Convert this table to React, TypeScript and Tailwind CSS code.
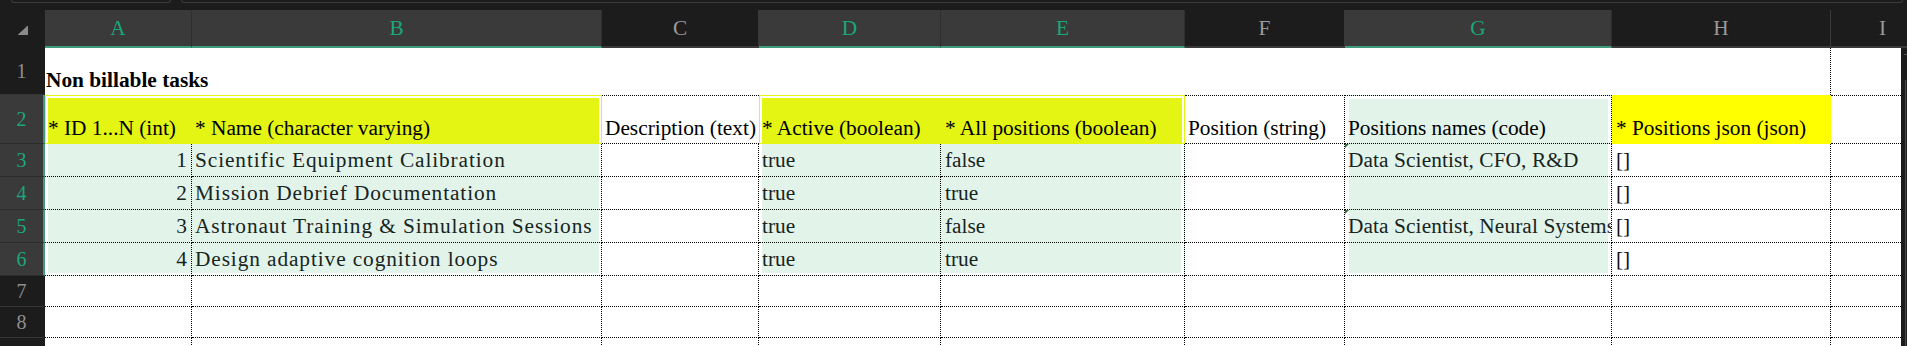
const serif = "font-['Liberation_Serif','Times_New_Roman',serif]";

const tasks = [
  { id: 1, name: "Scientific Equipment Calibration", active: "true", all: "false", positions: "Data Scientist, CFO, R&D", flag: true },
  { id: 2, name: "Mission Debrief Documentation", active: "true", all: "true", positions: "", flag: false },
  { id: 3, name: "Astronaut Training & Simulation Sessions", active: "true", all: "false", positions: "Data Scientist, Neural Systems", flag: true },
  { id: 4, name: "Design adaptive cognition loops", active: "true", all: "true", positions: "", flag: false },
];

const cell = "flex items-end overflow-hidden whitespace-nowrap border-dotted border-black leading-[24px]";
const mint = "bg-[#e2f3ea] text-[#18241e]";

function RowHead({ n, on, h }: { n?: number; on?: boolean; h: string }) {
  return (
    <div
      className={
        "flex w-[45px] shrink-0 items-center justify-center text-[20px] leading-[24px] " +
        h +
        (on
          ? " bg-[#3a3a3a] text-[#1ba77b] border-r-2 border-r-[#3e9c7b] border-b border-b-[#2c2c2c]"
          : " bg-[#1c1c1c] text-[#8e8e8e] border-r-2 border-r-[#1c1c1c] border-b border-b-[#363636]")
      }
    >
      {n}
    </div>
  );
}

function ColHead({ label, on, w }: { label: string; on?: boolean; w: string }) {
  return (
    <div
      className={
        "flex shrink-0 items-center justify-center border-r border-b-2 leading-[24px] " +
        w +
        (on
          ? " bg-[#3a3a3a] text-[#1aa67a] border-r-[#2f2f2f] border-b-[#3e9c7b]"
          : " bg-[#1c1c1c] text-[#9a9a9a] border-r-[#3a3a3a] border-b-[#3a3a3a]")
      }
    >
      {label}
    </div>
  );
}

function EmptyRow({ n, h }: { n?: number; h: string }) {
  return (
    <div className="flex">
      <RowHead n={n} h={h} />
      <div className={cell + " w-[147px] border-r border-b " + h} />
      <div className={cell + " w-[410px] border-r border-b " + h} />
      <div className={cell + " w-[157px] border-r border-b " + h} />
      <div className={cell + " w-[182px] border-r border-b " + h} />
      <div className={cell + " w-[244px] border-r border-b " + h} />
      <div className={cell + " w-[160px] border-r border-b " + h} />
      <div className={cell + " w-[267px] border-r border-b " + h} />
      <div className={cell + " w-[219px] border-r border-b " + h} />
      <div className={cell + " w-[70px] border-b " + h} />
    </div>
  );
}

export default function App() {
  return (
    <div className={"h-[346px] w-[1907px] overflow-hidden bg-[#1c1c1c] text-[21.33px] " + serif}>
      {/* window tabs strip */}
      <div className="flex h-[10px] items-start">
        <div className="ml-[11px] h-[3px] w-[160px] rounded-b-[5px] border-x border-b border-[#3c3c3c]" />
        <div className="ml-[10px] mr-[4px] h-[3px] flex-1 rounded-b-[5px] border-x border-b border-[#3c3c3c]" />
      </div>

      {/* column headers */}
      <div className="flex h-[38px]">
        <div className="flex w-[45px] shrink-0 items-end justify-end pb-[12px] pr-[16px]">
          <svg width="12" height="11" viewBox="0 0 12 11">
            <path d="M11 1 L11 10 L1.5 10 Q0.5 10 1.3 9.2 L10 1.2 Q11 0.3 11 1 Z" fill="#8a8a8a" />
          </svg>
        </div>
        <ColHead label="A" on w="w-[147px]" />
        <ColHead label="B" on w="w-[410px]" />
        <ColHead label="C" w="w-[157px]" />
        <ColHead label="D" on w="w-[182px]" />
        <ColHead label="E" on w="w-[244px]" />
        <ColHead label="F" w="w-[160px]" />
        <ColHead label="G" on w="w-[267px]" />
        <ColHead label="H" w="w-[219px]" />
        <div className="flex flex-1 items-center border-b-2 border-b-[#3a3a3a] pl-[48px] leading-[24px] text-[#9a9a9a]">I</div>
      </div>

      <div className="flex">
        <div className="w-[1901px] bg-white">
          {/* row 1 */}
          <div className="flex">
            <RowHead n={1} h="h-[47px]" />
            <div className={cell + " h-[47px] w-[1786px] border-r pb-[3px] pl-[1px] font-bold text-black"}>Non billable tasks</div>
            <div className={cell + " h-[47px] w-[70px]"} />
          </div>

          {/* row 2 — column titles */}
          <div className="flex text-black">
            <RowHead n={2} on h="h-[49px]" />
            <div className="h-[49px] w-[557px] border border-[#e4f514] bg-white px-[2px] pt-[2px]">
              <div className="flex h-full items-end bg-[#e4f514] pb-[3px] leading-[24px] whitespace-nowrap">
                <div className="w-[144px]">* ID 1...N (int)</div>
                <div className="pl-[3px]">* Name (character varying)</div>
              </div>
            </div>
            <div className={cell + " h-[49px] w-[157px] border-y pb-[3px] pl-[3px]"}>Description (text)</div>
            <div className="h-[49px] w-[426px] border border-[#e4f514] bg-white px-[2px] pt-[2px]">
              <div className="flex h-full items-end bg-[#e4f514] pb-[3px] leading-[24px] whitespace-nowrap">
                <div className="w-[179px]">* Active (boolean)</div>
                <div className="pl-[4px]">* All positions (boolean)</div>
              </div>
            </div>
            <div className={cell + " h-[49px] w-[160px] border-y border-r pb-[3px] pl-[3px]"}>Position (string)</div>
            <div className={cell + " h-[49px] w-[267px] border-y border-r pb-[3px] pl-[3px] bg-[#e2f3ea] shadow-[inset_4px_0_0_#fff,inset_-3px_0_0_#fff,inset_0_3px_0_#fff]"}>
              Positions names (code)
            </div>
            <div className="flex h-[49px] w-[219px] items-end border-y border-[#ffff00] bg-[#ffff00] pb-[3px] pl-[4px] leading-[24px] whitespace-nowrap">
              * Positions json (json)
            </div>
            <div className={cell + " h-[49px] w-[70px] border-y"} />
          </div>

          {/* data rows */}
          {tasks.map((t, i) => {
            const last = i === tasks.length - 1;
            return (
              <div key={t.id} className="flex">
                <RowHead n={i + 3} on h="h-[33px]" />
                <div className={cell + " " + mint + " h-[33px] w-[147px] justify-end border-r border-b pb-[4px] pr-[4px] " + (last ? "shadow-[inset_3px_-2px_0_#fff]" : "shadow-[inset_3px_0_0_#fff]")}>
                  {t.id}
                </div>
                <div className={cell + " " + mint + " h-[33px] w-[410px] border-r border-b pb-[4px] pl-[3px] tracking-[0.9px] " + (last ? "shadow-[inset_-2px_-2px_0_#fff]" : "shadow-[inset_-2px_0_0_#fff]")}>
                  {t.name}
                </div>
                <div className={cell + " h-[33px] w-[157px] border-r border-b"} />
                <div className={cell + " " + mint + " h-[33px] w-[182px] border-r border-b pb-[4px] pl-[3px] " + (last ? "shadow-[inset_3px_-2px_0_#fff]" : "shadow-[inset_3px_0_0_#fff]")}>
                  {t.active}
                </div>
                <div className={cell + " " + mint + " h-[33px] w-[244px] border-r border-b pb-[4px] pl-[4px] " + (last ? "shadow-[inset_-3px_-2px_0_#fff]" : "shadow-[inset_-3px_0_0_#fff]")}>
                  {t.all}
                </div>
                <div className={cell + " h-[33px] w-[160px] border-r border-b"} />
                <div className={cell + " " + mint + " relative h-[33px] w-[267px] border-r border-b pb-[4px] pl-[3px] tracking-[0.1px] " + (last ? "shadow-[inset_4px_0_0_#fff,inset_-3px_-2px_0_#fff]" : "shadow-[inset_4px_0_0_#fff,inset_-3px_0_0_#fff]")}>
                  {t.flag && (
                    <span className="absolute left-0 top-[-1px] h-0 w-0 border-t-[5px] border-r-[5px] border-solid border-t-[#1f7a2c] border-r-transparent" />
                  )}
                  {t.positions}
                </div>
                <div className={cell + " h-[33px] w-[219px] border-r border-b pb-[4px] pl-[4px] text-[#111]"}>[]</div>
                <div className={cell + " h-[33px] w-[70px] border-b"} />
              </div>
            );
          })}

          <EmptyRow n={7} h="h-[31px]" />
          <EmptyRow n={8} h="h-[31px]" />
          <EmptyRow h="h-[31px]" />
        </div>

        {/* scrollbar */}
        <div className="w-[6px] bg-[#1c1c1c]">
          <div className="ml-[3px] mt-[6px] h-px w-[3px] bg-[#555]" />
          <div className="ml-[4px] mt-[25px] h-[300px] w-px bg-[#4a4a4a]" />
        </div>
      </div>
    </div>
  );
}
